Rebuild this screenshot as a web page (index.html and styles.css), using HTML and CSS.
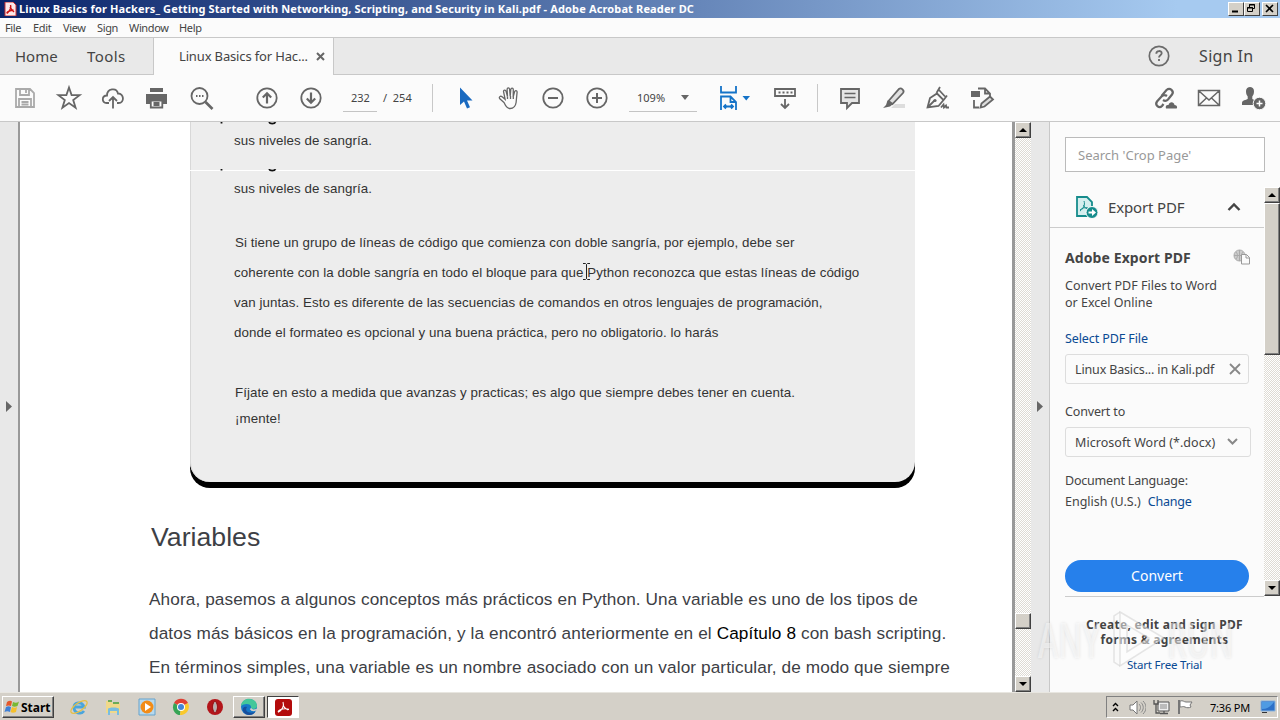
FILE: index.html
```html
<!DOCTYPE html>
<html lang="en">
  <head>
    <meta charset="UTF-8" />
    <meta name="viewport" content="width=device-width, initial-scale=1.0" />
    <title>Adobe Acrobat Reader DC</title>
    <link rel="stylesheet" href="styles.css">
  </head>
  <body>
    <div class="titlebar">
      <svg class="title-icon" width="13" height="14" viewBox="0 0 13 14">
        <path d="M1 0h8l3 3v11H1z" fill="#fbeaea" stroke="#c33" />
        <path d="M6.500 3c1 3-1 6-3 8-1.500 0 0-2 6-3M6 5c1 2 2 3 4 5" fill="none" stroke="#c11" stroke-width="1.400" />
      </svg>
      <span class="title-text">Linux Basics for Hackers_ Getting Started with Networking, Scripting, and Security in Kali.pdf - Adobe Acrobat Reader DC</span>
      <div class="window-buttons">
        <span class="win-btn"><svg width="13" height="11"><path d="M3 8.500h6" stroke="#000" stroke-width="2" /></svg></span>
        <span class="win-btn"><svg width="13" height="11"><path d="M4.500 4V1.500h5v4H8M4 2h6M2.500 4.500h5v4h-5zM2 5h6" fill="none" stroke="#000" /></svg></span>
        <span class="win-btn close"><svg width="13" height="11"><path d="M3 2l7 7M10 2L3 9" stroke="#000" stroke-width="1.600" /></svg></span>
      </div>
    </div>

    <div class="menubar">
      <span class="menu-file">File</span>
      <span class="menu-edit">Edit</span>
      <span class="menu-view">View</span>
      <span class="menu-sign">Sign</span>
      <span class="menu-window">Window</span>
      <span class="menu-help">Help</span>
    </div>

    <div class="tabs">
      <div class="tab-group">
        <span class="tab-home">Home</span>
        <span class="tab-tools">Tools</span>
      </div>
      <div class="tab-active">
        <span class="tab-name">Linux Basics for Hac...</span>
        <svg width="9" height="9" viewBox="0 0 9 9"><path d="M1 1l7 7M8 1L1 8" stroke="#666" stroke-width="2" /></svg>
      </div>
      <div class="tab-rest">
        <svg width="22" height="22" viewBox="0 0 22 22" fill="none" stroke="#6b6b6b" stroke-width="1.700">
          <circle cx="11" cy="11" r="9.700" />
          <path d="M8.300 8.700c0-3.600 5.400-3.400 5.400-.4 0 1.900-2.700 2.100-2.700 4.200M11 14v2" stroke-width="1.800" />
        </svg>
        <span class="sign-in">Sign In</span>
      </div>
    </div>

    <div class="toolbar">
      <svg class="tool muted" viewBox="0 0 44 44"><path d="M13 13h14l4 4v14H13zM17 13v6h9v-6M16 31v-8h12v8M18.500 26h7M18.500 28.500h7M23 14v3" /></svg>
      <svg class="tool" viewBox="0 0 44 44"><path d="M22 11.500l2.600 7.600 8 .1-6.400 4.800 2.400 7.800-6.600-4.700-6.600 4.700 2.400-7.800-6.400-4.800 8-.1z" /></svg>
      <svg class="tool" viewBox="0 0 44 44"><path d="M18 27h-2.500c-5 0-5-7.500.5-7.500 0-7 9.500-8.500 11-2 6-.5 7 9.500.5 9.500H26M22 32.500V21M18 25l4-4 4 4" /></svg>
      <svg class="tool" viewBox="0 0 44 44"><path class="solid" d="M15 12h13v4H15zM11 18h21v10h-4v-4H15v4h-4z" /><path d="M15.800 24.500h11.500v7H15.800zM18.500 27h6M18.500 29h6" /></svg>
      <svg class="tool" viewBox="0 0 44 44"><circle cx="20.500" cy="20" r="8" /><path d="M26.500 26l7 7" stroke-width="2.600" /><path d="M17 20h1.500M20 20h1.500M23 20h1.500" stroke-width="1.800" /></svg>
      <svg class="tool" viewBox="0 0 44 44"><circle cx="22" cy="22" r="9.700" /><path d="M22 27.500v-10M17.800 21.500l4.200-4.200 4.200 4.200" stroke-width="2.200" /></svg>
      <svg class="tool" viewBox="0 0 44 44"><circle cx="22" cy="22" r="9.700" /><path d="M22 16.500v10M17.800 22.500l4.200 4.200 4.200-4.200" stroke-width="2.200" /></svg>
      <span class="page-input">232</span>
      <span class="page-total">/&nbsp; 254</span>
      <span class="separator"></span>
      <svg class="tool" viewBox="0 0 44 44"><path d="M17 11.500v17.500l4-3.500 3 7 3-1.300-3-6.700h5.500z" fill="#1a6ac0" stroke="none" /></svg>
      <svg class="tool hand" viewBox="0 0 44 44"><path d="M17 26.500l-4.200-3.700c-1.300-1.800.6-3.300 2.300-2.100l3 2.500-1.600-7.700c0-1.800 2.100-2 2.600-.2l1.400 5.200-.4-7.200c.1-1.900 2.300-1.900 2.500 0l.6 7 .6-7c.3-1.700 2.400-1.600 2.500.2l-.1 7.300 1.400-5.200c.6-1.700 2.600-1.200 2.500.5l-1 10.400c-.6 4-2.600 6-6 6-3.200 0-4.600-2.600-6.100-6z" /><path d="M20.500 20.500v2.500M23.500 20v3M26.300 20.500v2.500" /></svg>
      <svg class="tool" viewBox="0 0 44 44"><circle cx="22" cy="22" r="9.700" /><path d="M17 22h10" stroke-width="2" /></svg>
      <svg class="tool" viewBox="0 0 44 44"><circle cx="22" cy="22" r="9.700" /><path d="M17 22h10M22 17v10" stroke-width="2" /></svg>
      <span class="zoom-input"><span>109%</span><svg width="8" height="5"><path d="M0 0h8L4 5z" fill="#666" /></svg></span>
      <svg class="tool fit" viewBox="0 0 44 44"><path d="M14 10v6.500h15V10M14 34V20.500h9.500L29 26v8M23.500 20.500V26H29M17 30.500h9M19 28.500l-2 2 2 2M24 28.500l2 2-2 2" /><path d="M35.500 20h7.500l-3.750 4.500z" fill="#1473c8" stroke="none" /></svg>
      <svg class="tool reading" viewBox="0 0 44 44"><path d="M12 13h20v7H12zM22 23v8.500M18 28l4 4 4-4" /><path d="M15.500 16.500h14" stroke-dasharray="2 2" /></svg>
      <span class="separator second"></span>
      <svg class="tool" viewBox="0 0 44 44"><path d="M13 13h18v14h-7l-5 5v-5h-6z" fill="#e5e5e5" /><path d="M16.500 17.500h11M16.500 21.500h11" stroke-width="1.300" /></svg>
      <svg class="tool" viewBox="0 0 44 44"><path d="M23 28h10v4H19z" fill="#ddd" stroke="none" /><path d="M16.500 25l10.500-12c2-1.700 6 1.500 4 4L20.500 28z" fill="#e0e0e0" /><path class="solid" d="M15.500 24.500l5 4-2.500 2-7 1.500 3-3z" /></svg>
      <svg class="tool" viewBox="0 0 44 44"><path d="M11.500 31.500l2.500-9.500 7-4.500 6.500 6.500-5 6zM12 31l6.500-6.500M20.500 17l3.500-6M23 14l6 6.500M28 23.500l3-4M25 31.500l2.500-3 .5 3 2-2 .5 2h2.500" /><circle class="solid" cx="19" cy="24.500" r="1.600" /></svg>
      <svg class="tool" viewBox="0 0 44 44"><path d="M18 12.500h7l5 5v3M25 12.500v5h5M14 24v7.500h5" /><path class="solid" d="M11 15h9v6h-9z" /><path d="M20.500 31.500l1-4 8.500-7 3 3-8.500 7z" fill="#ddd" /></svg>
      <div class="share-tools">
        <svg class="tool" viewBox="0 0 44 44"><path stroke-width="2.200" d="M18.500 20l5-6c3.500-3 8 1 5.500 4.500l-4 5c-1.500 1.500-3.500 1.500-5 .5M24 20c-2-1.500-4-1-5.500.5l-4.500 5c-2.500 3.500 2 7.500 5 4.500l1.500-2" /><path class="solid" d="M23 32.500c-1-3 1-4 2.500-3.500 1-4 5.500-3.500 6 0 3 0 3 3.500 2 3.500z" /></svg>
        <svg class="tool" viewBox="0 0 44 44"><path stroke-width="1.500" d="M11.500 14.500h21v15h-21zM12 15l10 9 10-9M12 29l7.500-7M32 29l-7.500-7" /></svg>
        <svg class="tool" viewBox="0 0 44 44"><path class="solid" d="M15 15c0-5.500 8-5.500 8 0 0 2.500-.5 4-1.700 5.500v2.500c1 1 3.200 1 3.200 2v4H11v-2c0-3 4-3 5.700-4v-2.500C15.500 19 15 17.500 15 15z" /><circle cx="28.500" cy="27.500" r="6.300" fill="#666" stroke="#fbfbfb" stroke-width="1" /><path d="M25.500 27.500h6M28.500 24.500v6" stroke="#fff" stroke-width="1.500" /></svg>
      </div>
    </div>

    <div class="workspace">
      <div class="left-gutter"><svg width="6" height="11"><path d="M0 0l6 5.500L0 11z" fill="#666" /></svg></div>

      <div class="page">
        <div class="note">
          <div class="note-top">
            <p class="line">sus niveles de sangría.</p>
          </div>
          <div class="note-body">
            <p class="line first">sus niveles de sangría.</p>
            <p class="line in">Si tiene un grupo de líneas de código que comienza con doble sangría, por ejemplo, debe ser</p>
            <p class="line">coherente con la doble sangría en todo el bloque para que Python reconozca que estas líneas de código</p>
            <p class="line">van juntas. Esto es diferente de las secuencias de comandos en otros lenguajes de programación,</p>
            <p class="line">donde el formateo es opcional y una buena práctica, pero no obligatorio. lo harás</p>
            <p class="line in spaced">Fíjate en esto a medida que avanzas y practicas; es algo que siempre debes tener en cuenta.</p>
            <p class="line in last">¡mente!</p>
          </div>
          <!-- descenders of the line scrolled out of view -->
          <svg class="cut" width="60" height="3"><path d="M1.500 0v1.500M49 .2c1 2 5.500 2 6.500 0" fill="none" stroke="#111" stroke-width="1.800" /></svg>
          <svg class="cut lower" width="60" height="3"><path d="M1.500 0v1.500M49 .2c1 2 5.500 2 6.500 0" fill="none" stroke="#111" stroke-width="1.800" /></svg>
        </div>
        <h1>Variables</h1>
        <div class="text">
          <p>Ahora, pasemos a algunos conceptos más prácticos en Python. Una variable es uno de los tipos de</p>
          <p>datos más básicos en la programación, y la encontró anteriormente en el <b>Capítulo 8</b> con bash scripting.</p>
          <p>En términos simples, una variable es un nombre asociado con un valor particular, de modo que siempre</p>
        </div>
        <svg class="cursor" width="9" height="17" viewBox="0 0 9 17"><path d="M1 .5h2.500l1 1 1-1H8M4.500 1.500v14M1 16.500h2.500l1-1 1 1H8" fill="none" stroke="#222" /></svg>
      </div>

      <div class="scrollbar page-scroll">
        <span class="scroll-btn"><svg width="8" height="4"><path d="M4 0l4 4H0z" /></svg></span>
        <span class="thumb"></span>
        <span class="scroll-btn"><svg width="8" height="4"><path d="M0 0h8L4 4z" /></svg></span>
      </div>

      <div class="right-gutter"><svg width="6" height="11"><path d="M0 0l6 5.500L0 11z" fill="#666" /></svg></div>

      <div class="side">
        <div class="search">Search 'Crop Page'</div>
        <div class="side-main">
          <div class="side-content">
            <div class="export-head">
              <svg width="24" height="24" viewBox="0 0 24 24">
                <path d="M2 2h10l5 5v14H2z" fill="#d5eeee" stroke="#168c8c" stroke-width="1.800" />
                <path d="M9 6c1.500 4-1 8-4 10M8.500 10c1 3 3 4 5 3.500M5 15c2-2 5-3 8-2" fill="none" stroke="#168c8c" />
                <circle cx="17" cy="17.500" r="6" fill="#168c8c" stroke="#fbfbfb" />
                <path d="M13.500 17.500h5" stroke="#fff" stroke-width="2" /><path d="M17 14l4 3.500-4 3.500z" fill="#fff" />
              </svg>
              <span class="export-title">Export PDF</span>
              <svg width="14" height="10" viewBox="0 0 14 10"><path d="M1.500 8L7 2.500 12.500 8" fill="none" stroke="#444" stroke-width="2.400" /></svg>
            </div>
            <div class="export-body">
              <div class="adobe-row">
                <span>Adobe Export PDF</span>
                <svg width="17" height="16" viewBox="0 0 17 16" fill="none" stroke="#aaa">
                  <circle cx="6.500" cy="6.500" r="5.500" fill="#ccc" /><path d="M1 6.500h11M6.500 1v11M3 3c2 2 2 5 0 7M10 3c-2 2-2 5 0 7" />
                  <path d="M8.500 5.500h5l3 3v6.500h-8zM13 5.500V9h3.500" fill="#fbfbfb" stroke="#999" />
                </svg>
              </div>
              <p class="desc">Convert PDF Files to Word<br>or Excel Online</p>
              <a class="select-file">Select PDF File</a>
              <div class="field">
                <span class="file-name">Linux Basics... in Kali.pdf</span>
                <svg width="12" height="12"><path d="M1 1l10 10M11 1L1 11" stroke="#888" stroke-width="1.800" /></svg>
              </div>
              <p class="label">Convert to</p>
              <div class="field wide">
                <span class="format">Microsoft Word (*.docx)</span>
                <svg width="11" height="8"><path d="M1 1l4.500 4.500L10 1" fill="none" stroke="#888" stroke-width="2" /></svg>
              </div>
              <p class="language"><span class="lang-label">Document Language:</span><br>English (U.S.)<a class="change">Change</a></p>
              <div class="convert">Convert</div>
            </div>
          </div>
          <div class="scrollbar side-scroll">
            <span class="scroll-btn"><svg width="8" height="4"><path d="M4 0l4 4H0z" /></svg></span>
            <span class="thumb"></span>
            <span class="scroll-btn"><svg width="8" height="4"><path d="M0 0h8L4 4z" /></svg></span>
          </div>
        </div>
        <div class="promo">
          <b>Create, edit and sign PDF</b>
          <b>forms &amp; agreements</b>
          <a class="trial">Start Free Trial</a>
        </div>
      </div>
    </div>

    <div class="watermark">
      <span class="mark-word">ANY</span>
      <svg width="62" height="64" viewBox="0 0 62 64"><path d="M15 4l44 26-44 28zM22 17v27l22-14z" fill-rule="evenodd" /><path d="M15 4l-6 4v46l6 4" fill="none" /></svg>
      <span class="mark-word">RUN</span>
    </div>

    <div class="taskbar">
      <div class="start">
        <svg width="17" height="16" viewBox="0 0 17 16">
          <path d="M3 3c2-1.500 4-1.500 5-.5L7 7C5 6 3.500 6.500 2 7z" fill="#e5582b" />
          <path d="M9 3c2 1 4 1 6-.5L13.500 7c-2 1-4 1-5.500 0z" fill="#78b833" />
          <path d="M2 8c2-1 3-1 5 0l-1 5c-2-1-3.500-1-5.500 0z" fill="#3f80d6" />
          <path d="M8 8c2 1 3.500 1 5 0l-1 5c-2 1-4 1-5.500 0z" fill="#f5c02c" />
        </svg>
        <b>Start</b>
      </div>
      <svg class="app ie" viewBox="0 0 18 18"><path d="M14 13c-3 4-10 2-10-3.500S12 3 14 9H5" fill="none" stroke="#4aa5dc" stroke-width="2.800" /><ellipse cx="9" cy="9" rx="9.500" ry="4" fill="none" stroke="#e6bf45" stroke-width="1.300" transform="rotate(-35 9 9)" /></svg>
      <svg class="app" viewBox="0 0 18 18"><path d="M2 3h5l1 2h8v10H2z" fill="#f0d98a" /><path d="M4 3h4M9 5h6" stroke="#6cab58" stroke-width="2" /><path d="M4 17v-6c0-2 11-2 11 0v6h-2v-4H6v4z" fill="#79bde0" /></svg>
      <svg class="app" viewBox="0 0 18 18"><path d="M1 1h16v16H1z" fill="#b7d9ee" stroke="#67a3cc" /><circle cx="9" cy="9" r="6.500" fill="#f28c18" /><path d="M7 5l6 4-6 4z" fill="#fff" /></svg>
      <svg class="app" viewBox="0 0 18 18"><path d="M9 9L2 5c3-6 12-5 14 0z" fill="#df4034" /><path d="M9 9L2 5c-3 6 1 12 6 12z" fill="#36a455" /><path d="M9 9l7-4c3 6-2 12-8 12z" fill="#fac92c" /><circle cx="9" cy="9" r="4" fill="#fff" /><circle cx="9" cy="9" r="3" fill="#4285d8" /></svg>
      <svg class="app opera" viewBox="0 0 18 18"><circle cx="9" cy="9" r="8" fill="#b3151a" /><ellipse cx="9" cy="9" rx="2.200" ry="5.500" fill="#eee" stroke="#840b0e" /><path d="M9 5v8" stroke="#777" /></svg>
      <div class="task-btn">
        <svg width="18" height="18" viewBox="0 0 18 18"><circle cx="9" cy="9" r="8" fill="#1678c8" /><path d="M1 8C2-2 17-1 17 8c0 3-4 4-6 2 1-5-7-5-10-2z" fill="#43c79a" /><path d="M7 9c-3 4 2 7 8 5-2 4-10 4-12-1-1-3 1-5 4-4z" fill="#174e9c" /><path d="M10.500 10.500c1 2 4 2 6.500 1" stroke="#d4d0c8" stroke-width="1.800" fill="none" /></svg>
      </div>
      <div class="task-btn acrobat">
        <svg width="17" height="17" viewBox="0 0 17 17"><rect width="17" height="17" rx="3" fill="#b30b0b" /><path d="M8 3c1.500 4-1 8-4.500 10-1.500-1 3-4 9.500-3 2 1-3 1.500-5-4" fill="none" stroke="#fff" stroke-width="1.100" /></svg>
      </div>
      <div class="tray">
        <svg width="7" height="11"><path d="M1 4l2.500-2.500L6 4M1 9l2.500-2.500L6 9" fill="none" stroke="#000" stroke-width="1.400" /></svg>
        <svg class="speaker" width="17" height="15" viewBox="0 0 17 15"><path d="M1 5h3l4-4v13l-4-4H1z" fill="#fff" stroke="#777" /><path d="M10 4c2 2 2 5 0 7M12 2.500c3 3 3 7 0 10M14 1c4 4 4 9 0 13" fill="none" stroke="#888" /></svg>
        <svg class="network" width="17" height="16" viewBox="0 0 17 16"><path d="M5 3h11v9H5z" fill="#eee" stroke="#555" /><path d="M7 5h7v5H7z" fill="#bbb" /><path d="M7 14.500h8M11 12v2M1 1v4h4V1M3 5v9h4" fill="none" stroke="#555" stroke-width="1.300" /></svg>
        <svg class="flag" width="17" height="16" viewBox="0 0 17 16"><path d="M2 1v14" stroke="#777" stroke-width="2" /><path d="M3 2c3-1 4 1 6 1h6l-2 3 1 2c-2 1-4 1-6 0-2-1-3 0-5 0z" fill="#fff" stroke="#777" /></svg>
        <span class="clock">7:36 PM</span>
        <svg class="desktop" width="16" height="14" viewBox="0 0 16 14"><path d="M1 1h14v10H1z" fill="#2c70c8" stroke="#8bb4dd" /><path d="M2 9c6 0 9-3 12-7H2z" fill="#4f9be3" /><path d="M2 12.500h5" stroke="#333" /></svg>
      </div>
    </div>
  </body>
</html>
```
FILE: styles.css
```css
* {
  box-sizing: border-box;
}

body {
  width: 1280px;
  height: 720px;
  margin: 0;
  overflow: hidden;
  display: flex;
  flex-direction: column;
  font-family: "Noto Sans", sans-serif;
  font-size: 12px;
  color: #444;
  background: #fbfbfb;
  white-space: nowrap;
}

p,
h1 {
  margin: 0;
}

svg {
  display: block;
  flex: none;
}

/* Title bar */
.titlebar {
  height: 18px;
  display: flex;
  align-items: center;
  padding: 0 2px 0 4px;
  background: linear-gradient(90deg, #0a246a 0%, #a6caf0 92%);
  color: #fff;
}

.title-text {
  margin-left: 2px;
  font-size: 11px;
  font-weight: 700;
  line-height: 16px;
  letter-spacing: 0.137px;
}

.window-buttons {
  display: flex;
  margin-left: auto;
}

.win-btn {
  width: 16px;
  height: 14px;
  background: #d4d0c8;
  border: 1px solid #404040;
  border-top-color: #fff;
  border-left-color: #fff;
}

.win-btn.close {
  margin-left: 2px;
}

/* Menu bar */
.menubar {
  height: 20px;
  display: flex;
  padding-left: 5px;
  font-size: 11px;
  line-height: 20px;
  letter-spacing: -0.35px;
  border-bottom: 1px solid #c8c8c8;
}

.menubar span {
  flex: none;
}

.menu-file {
  width: 28px;
}

.menu-edit {
  width: 30px;
}

.menu-view {
  width: 34px;
}

.menu-sign {
  width: 32px;
}

.menu-window {
  width: 50px;
}

/* Tabs */
.tabs {
  height: 37px;
  display: flex;
  font-size: 15px;
  line-height: 37px;
}

.tab-group {
  width: 154px;
  display: flex;
  padding-left: 15px;
  background: #e9e9e9;
  border-right: 1px solid #c8c8c8;
  border-bottom: 1px solid #c8c8c8;
}

.tab-home {
  width: 72px;
}

.tab-tools {
  letter-spacing: 0.4px;
}

.tab-active {
  width: 179px;
  display: flex;
  align-items: center;
  padding-left: 25px;
  font-size: 13px;
}

.tab-name {
  width: 137px;
  letter-spacing: -0.15px;
}

.tab-rest {
  flex: 1;
  display: flex;
  align-items: center;
  padding-left: 814px;
  font-size: 16px;
  background: #e9e9e9;
  border-left: 1px solid #c8c8c8;
  border-bottom: 1px solid #c8c8c8;
}

.sign-in {
  margin-left: 29px;
  letter-spacing: 0.35px;
}

/* Toolbar */
.toolbar {
  height: 47px;
  display: flex;
  align-items: center;
  padding-left: 3px;
  border-bottom: 1px solid #c8c8c8;
}

.tool {
  width: 44px;
  height: 44px;
  fill: none;
  stroke: #666;
  stroke-width: 1.8;
}

.tool:nth-of-type(6) {
  margin-left: 22px;
}

.tool .solid {
  fill: #666;
  stroke: none;
}

.tool.muted {
  stroke: #aaa;
}

.tool.hand {
  stroke-width: 1.3;
}

.page-input {
  width: 34px;
  height: 27px;
  margin-left: 10px;
  padding-left: 8px;
  font-size: 11px;
  line-height: 26px;
  border-bottom: 1px solid #c4c4c4;
}

.page-total {
  width: 55px;
  height: 27px;
  padding-left: 6px;
  font-size: 11px;
  line-height: 26px;
}

.separator {
  width: 1px;
  height: 28px;
  margin-right: 10px;
  background: #c8c8c8;
}

.zoom-input {
  width: 68px;
  height: 27px;
  margin-left: 10px;
  padding: 0 8px 0 8px;
  display: flex;
  align-items: center;
  justify-content: space-between;
  font-size: 11px;
  border-bottom: 1px solid #c4c4c4;
}

.tool.fit {
  margin-left: 10px;
  stroke: #1473c8;
}

.tool.reading {
  margin-left: 12px;
}

.separator.second {
  margin-left: 10px;
}

.share-tools {
  display: flex;
  margin-left: auto;
  margin-right: 5px;
}

/* Workspace */
.workspace {
  height: 570px;
  display: flex;
}

.left-gutter {
  width: 20px;
  padding: 279px 0 0 6px;
  background: #e8e8e8;
  border-right: 2px solid #999;
}

.page {
  position: relative;
  width: 992px;
  overflow: hidden;
  padding-left: 129px;
  background: #fff;
  font-family: "Liberation Sans", Arial, sans-serif;
}

.note {
  position: relative;
  width: 725px;
  height: 360px;
  margin-left: 41px;
  background: #ededed;
  border-radius: 0 0 20px 20px;
  box-shadow: inset 1px 0 #d8d8d8, 0 6px #000;
  font-size: 13.33px;
  letter-spacing: 0.073px;
  color: #333;
}

.note-top {
  height: 49px;
  overflow: hidden;
  padding-top: 4px;
  border-bottom: 1px solid #fff;
}

.cut {
  position: absolute;
  left: 30px;
  top: 0;
}

.cut.lower {
  top: 47px;
}

.line {
  height: 30px;
  padding-left: 44px;
  line-height: 30px;
}

.line.first {
  margin: 3px 0 24px;
}

.line.in {
  padding-left: 45px;
}

.line.spaced {
  margin-top: 30px;
}

.line.last {
  margin-top: -4px;
}

h1 {
  margin-top: 34px;
  padding-left: 2px;
  font-size: 26.7px;
  font-weight: 400;
  line-height: 42px;
  color: #3d4045;
}

.text {
  margin-top: 24px;
  font-size: 17.2px;
  line-height: 34px;
  letter-spacing: 0.108px;
  color: #3d4045;
}

.text b {
  font-weight: 400;
  color: #000;
}

.cursor {
  position: absolute;
  left: 562px;
  top: 141px;
}

/* Scrollbars */
.scrollbar {
  display: flex;
  flex-direction: column;
  background: repeating-conic-gradient(#fff 0 25%, #dedbd4 0 50%) 0 0 / 2px 2px;
}

.scroll-btn {
  height: 16px;
  display: flex;
  align-items: center;
  justify-content: center;
}

.scroll-btn,
.thumb {
  background: #d4d0c8;
  border: 1px solid #404040;
  border-top-color: #fff;
  border-left-color: #fff;
  box-shadow: inset -1px -1px #808080;
}

.page-scroll {
  width: 19px;
  border-left: 3px solid #999;
}

.page-scroll .thumb {
  height: 16px;
  margin: 475px 0 47px;
}

.right-gutter {
  width: 19px;
  padding: 279px 0 0 6px;
  background: #e8e8e8;
  border-right: 1px solid #c8c8c8;
}

/* Side panel */
.side {
  flex: 1;
  font-size: 12.5px;
}

.search {
  width: 200px;
  height: 35px;
  margin: 15px 0 0 15px;
  padding-left: 12px;
  font-size: 13px;
  line-height: 34px;
  color: #999;
  background: #fff;
  border: 1px solid #bbb;
}

.side-main {
  height: 409px;
  margin-top: 15px;
  display: flex;
}

.side-content {
  width: 214px;
}

.side-scroll {
  width: 16px;
}

.side-scroll .thumb {
  height: 152px;
  margin-bottom: 225px;
}

.export-head {
  height: 41px;
  display: flex;
  align-items: center;
  padding-left: 25px;
  font-size: 15px;
  letter-spacing: -0.15px;
  border-bottom: 1px solid #ccc;
}

.export-title {
  width: 119px;
  margin-left: 9px;
}

.export-body {
  padding-left: 15px;
}

.adobe-row {
  width: 185px;
  height: 20px;
  margin-top: 19px;
  display: flex;
  align-items: center;
  justify-content: space-between;
  font-size: 14px;
  font-weight: 700;
  letter-spacing: 0.1px;
}

.desc {
  margin-top: 10px;
  line-height: 17px;
}

.select-file {
  display: block;
  margin-top: 18px;
  line-height: 20px;
  letter-spacing: -0.1px;
}

a {
  color: #0a4a93;
}

.field {
  width: 184px;
  height: 30px;
  margin-top: 5px;
  padding: 0 7px 0 9px;
  display: flex;
  align-items: center;
  justify-content: space-between;
  border: 1px solid #ddd;
  border-radius: 3px;
}

.file-name {
  letter-spacing: -0.15px;
}

.field.wide {
  width: 186px;
  padding-right: 12px;
}

.format {
  letter-spacing: 0.05px;
}

.label {
  margin-top: 18px;
  line-height: 20px;
  letter-spacing: -0.15px;
}

.language {
  margin-top: 13px;
  line-height: 21px;
}

.lang-label {
  letter-spacing: -0.2px;
}

.change {
  margin-left: 7px;
  letter-spacing: -0.2px;
}

.convert {
  width: 184px;
  height: 32px;
  margin-top: 48px;
  font-size: 14px;
  line-height: 31px;
  text-align: center;
  color: #fff;
  background: #2680eb;
  border-radius: 16px;
}

.promo {
  display: flex;
  flex-direction: column;
  align-items: center;
  margin-left: 15px;
  padding-top: 20px;
  width: 199px;
  font-size: 12px;
  line-height: 15px;
  letter-spacing: 0.3px;
  border-top: 1px solid #ccc;
}

.trial {
  margin-top: 10px;
  font-size: 11.5px;
  letter-spacing: -0.2px;
}

/* Watermark over the lower right corner */
.watermark {
  position: absolute;
  left: 1038px;
  top: 608px;
  display: flex;
  align-items: center;
  font: 600 48px/64px "Open Sans", sans-serif;
  color: rgba(255, 255, 255, 0.5);
  text-shadow: 0 0 4px rgba(0, 0, 0, 0.1);
}

.mark-word {
  width: 67px;
  transform: scaleX(0.64);
  transform-origin: left;
}

.watermark svg {
  fill: rgba(255, 255, 255, 0.5);
  stroke: rgba(205, 205, 205, 0.5);
  stroke-width: 1.5;
}

/* Taskbar */
.taskbar {
  height: 28px;
  display: flex;
  align-items: center;
  padding: 1px 2px 0;
  color: #000;
  background: #d4d0c8;
  border-top: 1px solid #e8e6e0;
}

.start {
  width: 52px;
  height: 22px;
  display: flex;
  align-items: center;
  padding-left: 1px;
  border: 1px solid #404040;
  border-top-color: #fff;
  border-left-color: #fff;
  box-shadow: inset -1px -1px #808080;
}

.app {
  width: 18px;
  height: 18px;
  margin-right: 16px;
}

.app.ie {
  margin-left: 16px;
}

.app.opera {
  margin-right: 9px;
}

.task-btn {
  width: 32px;
  height: 22px;
  display: flex;
  align-items: center;
  justify-content: center;
  border: 1px solid #404040;
  border-top-color: #fff;
  border-left-color: #fff;
  box-shadow: inset -1px -1px #808080;
}

.task-btn.acrobat {
  margin-left: 2px;
  background: #fff;
  border-color: #404040 #fff #fff #404040;
  box-shadow: none;
}

.tray {
  width: 172px;
  height: 22px;
  display: flex;
  align-items: center;
  margin-left: auto;
  padding: 0 1px 0 5px;
  font-size: 11px;
  border: 1px solid #808080;
  border-right-color: #fff;
  border-bottom-color: #fff;
}

.speaker {
  margin-left: 10px;
}

.network {
  margin-left: 7px;
}

.flag {
  margin-left: 7px;
}

.clock {
  margin-left: 16px;
  letter-spacing: -0.2px;
}

.desktop {
  margin-left: auto;
}
```
